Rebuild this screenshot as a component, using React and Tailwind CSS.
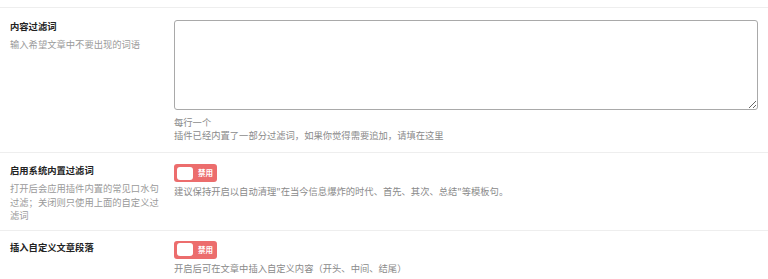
const FONT = { fontFamily: '"Noto Sans CJK SC", "Noto Sans", sans-serif' };

const Toggle = () => (
  <div className="flex items-center w-[43px] h-[18px] rounded-[3px] bg-[#ec6d6d] pl-[3px] gap-[5px]">
    <span className="block w-[16px] h-[13px] rounded-[3px] bg-white" />
    <span className="text-[7.5px] font-bold text-white leading-none">禁用</span>
  </div>
);

const Row = ({ title, desc, children, className = "" }) => (
  <div className={`flex border-t border-[#eeeeee] px-[10px] ${className}`}>
    <div className="w-[164px] shrink-0">
      <div className="w-[152px]">
        <h3 className="text-[9.3px] font-bold text-[#222] leading-[13px]">{title}</h3>
        {desc && <p className="mt-[5px] text-[9.3px] text-[#9a9a9a] leading-[13.5px]">{desc}</p>}
      </div>
    </div>
    <div className="flex-1 min-w-0">{children}</div>
  </div>
);

export default function App() {
  return (
    <div className="w-[768px] h-[279px] bg-white overflow-hidden pt-[7px]" style={FONT}>
      <Row title="内容过滤词" desc="输入希望文章中不要出现的词语" className="pt-[12px] pb-[10px]">
        <textarea className="block w-full h-[90px] border border-[#a9a9a9] rounded-[3px] bg-white outline-none" />
        <div className="mt-[6px] text-[9.3px] text-[#8a8a8a] leading-[13px]">
          <div>每行一个</div>
          <div>插件已经内置了一部分过滤词，如果你觉得需要追加，请填在这里</div>
        </div>
      </Row>
      <Row
        title="启用系统内置过滤词"
        desc="打开后会应用插件内置的常见口水句过滤；关闭则只使用上面的自定义过滤词"
        className="pt-[11px] pb-[7px]"
      >
        <Toggle />
        <p className="mt-[3px] text-[9.3px] text-[#8a8a8a] leading-[13px]">
          建议保持开启以自动清理"在当今信息爆炸的时代、首先、其次、总结"等模板句。
        </p>
      </Row>
      <Row title="插入自定义文章段落" className="pt-[10px] pb-[10px]">
        <Toggle />
        <p className="mt-[3px] text-[9.3px] text-[#8a8a8a] leading-[13px]">
          开启后可在文章中插入自定义内容（开头、中间、结尾）
        </p>
      </Row>
    </div>
  );
}
